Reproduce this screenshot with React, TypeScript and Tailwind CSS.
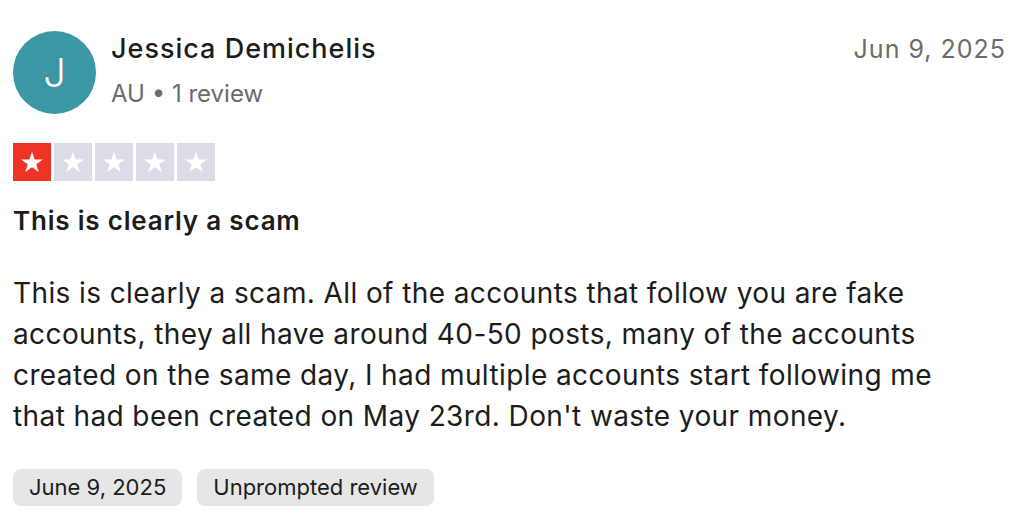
import React from 'react';

const lines = [
  'This is clearly a scam. All of the accounts that follow you are fake',
  'accounts, they all have around 40-50 posts, many of the accounts',
  'created on the same day, I had multiple accounts start following me',
  "that had been created on May 23rd. Don't waste your money.",
];

function Star({ filled }: { filled: boolean }) {
  return (
    <div
      className={`flex h-[38px] w-[38px] items-center justify-center ${
        filled ? 'bg-[#ee3424]' : 'bg-[#dcdce6]'
      }`}
    >
      <svg viewBox="0 0 24 24" className="h-[26px] w-[26px]" fill="white">
        <path d="M12 2.5l2.45 7.1H22l-6.1 4.4 2.35 7.2L12 16.8l-6.25 4.4 2.35-7.2L2 9.6h7.55z" />
      </svg>
    </div>
  );
}

export default function App() {
  return (
    <div
      className="h-[516px] w-[1024px] bg-white px-[13px] pt-[31px] text-[#1c1c1c]"
      style={{ fontFamily: 'Inter, "Noto Sans", sans-serif' }}
    >
      <div className="flex items-start">
        <div className="flex h-[83px] w-[83px] shrink-0 items-center justify-center rounded-full bg-[#3c97a4] text-[40px] font-light text-white">
          J
        </div>
        <div className="ml-[15px] flex-1">
          <div className="text-[27px] leading-[36px] font-medium tracking-[1px]">Jessica Demichelis</div>
          <div className="mt-[12px] text-[24px] leading-[30px] text-[#6b6b6b]">AU • 1 review</div>
        </div>
        <div className="pr-[5px] pt-[1px] text-[25px] leading-[34px] tracking-[1px] text-[#6b6b6b]">Jun 9, 2025</div>
      </div>

      <div className="mt-[29px] flex gap-[3px]">
        <Star filled />
        <Star filled={false} />
        <Star filled={false} />
        <Star filled={false} />
        <Star filled={false} />
      </div>

      <h2 className="mt-[23px] text-[26px] leading-[34px] font-semibold tracking-[0.8px]">This is clearly a scam</h2>

      <p className="mt-[35px] text-[28px] leading-[41px] tracking-[0.4px]">
        {lines.map((l) => (
          <span key={l} className="block">
            {l}
          </span>
        ))}
      </p>

      <div className="mt-[32px] flex gap-[15px]">
        <span className="rounded-[8px] bg-[#e6e6e6] px-[16px] text-[22px] leading-[37px]">June 9, 2025</span>
        <span className="rounded-[8px] bg-[#e6e6e6] px-[16px] text-[22px] leading-[37px]">Unprompted review</span>
      </div>
    </div>
  );
}
